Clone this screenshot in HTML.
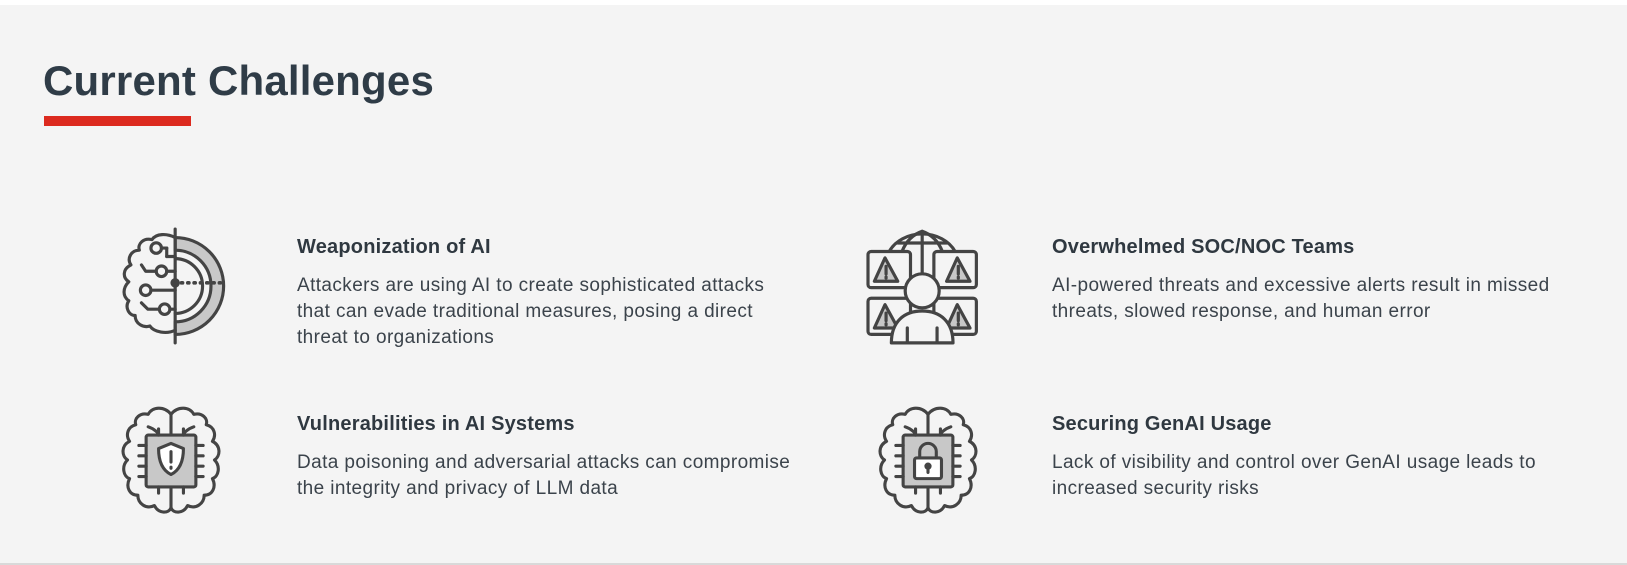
<!DOCTYPE html>
<html><head><meta charset="utf-8"><style>
html,body{margin:0;padding:0;}
body{width:1627px;height:565px;background:#fff;font-family:"Liberation Sans",Arial,sans-serif;color:#333d47;position:relative;overflow:hidden;}
.bg{position:absolute;left:0;top:5px;width:1627px;height:558px;background:#f4f4f4;border-bottom:2px solid #d9d9d9;}
h1{position:absolute;left:43px;top:57px;margin:0;font-size:42px;font-weight:bold;color:#2f3c47;letter-spacing:0.2px;}
.bar{position:absolute;left:44px;top:116px;width:147px;height:10px;background:#dc2a1f;}
.item{position:absolute;}
.item h3{margin:0;font-size:20px;font-weight:bold;color:#2f3840;line-height:24px;letter-spacing:0.2px;}
.item p{margin:14px 0 0;font-size:19px;line-height:26px;color:#3b434b;letter-spacing:0.4px;}
svg{position:absolute;}
</style></head><body>
<div class="bg"></div>
<h1>Current Challenges</h1>
<div class="bar"></div>

<svg style="left:114px;top:227px" width="116" height="118" viewBox="0 0 110 112" fill="none" stroke="#444" stroke-width="3" stroke-linecap="round" stroke-linejoin="round">
<path d="M58 30 A26 26 0 0 1 58 82" />
<path d="M58 10 A46 46 0 0 1 58 102 L58 90 A34 34 0 0 0 58 22 Z" fill="#c8c8c8"/>
<line x1="58" y1="2" x2="58" y2="110"/>
<path d="M58 10 C50 6 40 6 36 12 C28 10 22 16 24 22 C16 22 12 30 16 36 C8 40 8 48 14 52 C8 58 8 66 14 70 C10 76 14 84 20 84 C20 92 28 96 34 94 C38 100 50 102 58 98"/>
<circle cx="40" cy="20" r="5"/><line x1="45" y1="20" x2="50" y2="20"/><line x1="50" y1="20" x2="50" y2="28"/><line x1="50" y1="28" x2="58" y2="28"/>
<circle cx="45" cy="42" r="5"/><path d="M40 42 L30 42 L26 36 M50 42 L58 42"/>
<circle cx="30" cy="60" r="5"/><line x1="35" y1="60" x2="58" y2="60"/>
<circle cx="48" cy="78" r="5"/><path d="M43 78 L32 78 L26 72 M53 78 L58 78"/>
<circle cx="58" cy="53" r="3" fill="#444"/>
<path d="M64 53 h1 M70 53 h1 M76 53 h1 M82 53 h1 M88 53 h1 M94 53 h1 M100 53 h1" stroke-width="3.5"/>
</svg>

<div class="item" style="left:297px;top:235px;width:580px">
<h3>Weaponization of AI</h3>
<p>Attackers are using AI to create sophisticated attacks<br>that can evade traditional measures, posing a direct<br>threat to organizations</p>
</div>

<svg style="left:854px;top:226px" width="130" height="119" viewBox="0 0 120 112" fill="none" stroke="#444" stroke-width="3" stroke-linecap="round" stroke-linejoin="round">
<path d="M32 24 A34 28 0 0 1 94 24"/><path d="M44 24 C48 14 54 8 63 5 C72 8 78 14 82 24"/><line x1="63" y1="5" x2="63" y2="50"/><line x1="40" y1="16" x2="86" y2="16"/>
<rect x="12" y="24" width="40" height="34" rx="3" fill="#f4f4f4"/><rect x="74" y="24" width="40" height="34" rx="3" fill="#f4f4f4"/>
<rect x="12" y="68" width="40" height="34" rx="3" fill="#f4f4f4"/><rect x="74" y="68" width="40" height="34" rx="3" fill="#f4f4f4"/>
<path d="M28 30 L18 52 L40 52 Z" fill="#c8c8c8"/><path d="M96 30 L86 52 L108 52 Z" fill="#c8c8c8"/>
<path d="M28 74 L18 96 L40 96 Z" fill="#c8c8c8"/><path d="M96 74 L86 96 L108 96 Z" fill="#c8c8c8"/>
<path d="M29 38v7M29 48v1M97 38v7M97 48v1M29 82v7M29 92v1M97 82v7M97 92v1"/>
<circle cx="63" cy="61" r="16" fill="#f4f4f4"/>
<path d="M34 110 C34 90 46 80 63 80 C80 80 92 90 92 110 Z" fill="#f4f4f4"/>
<path d="M49 96v14M77 96v14"/>
</svg>

<div class="item" style="left:1052px;top:235px;width:575px">
<h3>Overwhelmed SOC/NOC Teams</h3>
<p>AI-powered threats and excessive alerts result in missed<br>threats, slowed response, and human error</p>
</div>

<svg style="left:117px;top:404px" width="108" height="114" viewBox="0 0 104 110" fill="none" stroke="#444" stroke-width="3" stroke-linecap="round" stroke-linejoin="round">
<path d="M52 10 C46 2 34 2 30 10 C22 8 16 14 18 20 C10 22 8 30 12 36 C4 40 4 50 10 54 C4 60 6 70 12 72 C8 80 12 88 20 88 C20 96 28 102 36 98 C40 106 50 106 52 100 C54 106 64 106 68 98 C76 102 84 96 84 88 C92 88 96 80 92 72 C98 70 100 60 94 54 C100 50 100 40 92 36 C96 30 94 22 86 20 C88 14 82 8 74 10 C70 2 58 2 52 10 Z"/>
<path d="M52 10 V30 M52 80 V100 M30 22 C36 24 40 28 40 30 M74 22 C68 24 64 28 64 30"/>
<rect x="28" y="30" width="48" height="50" rx="2" fill="#c8c8c8"/>
<path d="M40 30v-6M64 30v-6M40 80v6M64 80v6M28 40h-7M28 50h-7M28 60h-7M28 70h-7M76 40h7M76 50h7M76 60h7M76 70h7"/>
<path d="M52 38 L64 43 C64 56 60 64 52 68 C44 64 40 56 40 43 Z" fill="#fff"/>
<path d="M52 46v10M52 61v1"/>
</svg>

<div class="item" style="left:297px;top:412px;width:580px">
<h3>Vulnerabilities in AI Systems</h3>
<p>Data poisoning and adversarial attacks can compromise<br>the integrity and privacy of LLM data</p>
</div>

<svg style="left:874px;top:404px" width="108" height="114" viewBox="0 0 104 110" fill="none" stroke="#444" stroke-width="3" stroke-linecap="round" stroke-linejoin="round">
<path d="M52 10 C46 2 34 2 30 10 C22 8 16 14 18 20 C10 22 8 30 12 36 C4 40 4 50 10 54 C4 60 6 70 12 72 C8 80 12 88 20 88 C20 96 28 102 36 98 C40 106 50 106 52 100 C54 106 64 106 68 98 C76 102 84 96 84 88 C92 88 96 80 92 72 C98 70 100 60 94 54 C100 50 100 40 92 36 C96 30 94 22 86 20 C88 14 82 8 74 10 C70 2 58 2 52 10 Z"/>
<path d="M52 10 V30 M52 80 V100 M30 22 C36 24 40 28 40 30 M74 22 C68 24 64 28 64 30"/>
<rect x="28" y="30" width="48" height="50" rx="2" fill="#c8c8c8"/>
<path d="M40 30v-6M64 30v-6M40 80v6M64 80v6M28 40h-7M28 50h-7M28 60h-7M28 70h-7M76 40h7M76 50h7M76 60h7M76 70h7"/>
<path d="M44 52 V46 A8 8 0 0 1 60 46 V52"/>
<rect x="39" y="52" width="26" height="20" rx="2" fill="#fff"/>
<circle cx="52" cy="60" r="2" fill="#444"/><path d="M52 61v5"/>
</svg>

<div class="item" style="left:1052px;top:412px;width:575px">
<h3>Securing GenAI Usage</h3>
<p>Lack of visibility and control over GenAI usage leads to<br>increased security risks</p>
</div>
</body></html>
